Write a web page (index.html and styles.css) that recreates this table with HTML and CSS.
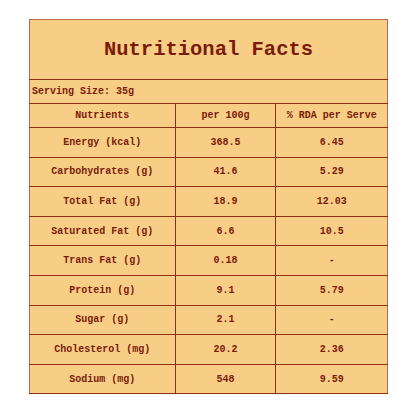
FILE: index.html
```html
<!DOCTYPE html>
<html lang="en">
<head>
    <meta charset="UTF-8">
    <meta name="viewport" content="width=device-width, initial-scale=1.0">
    <title>Nutritional Facts</title>
    <link rel="stylesheet" href="styles.css">
</head>
<body>
    <!-- Nutrition Table -->
    <table class="facts">
        <tr>
            <th class="facts-title" colspan="3">Nutritional Facts</th>
        </tr>
        <tr>
            <td class="serving" colspan="3">Serving Size: 35g</td>
        </tr>
        <tr class="head-row">
            <td class="col-name">Nutrients</td>
            <td class="col-value">per 100g</td>
            <td class="col-rda">% RDA per Serve</td>
        </tr>
        <tr><td>Energy (kcal)</td><td>368.5</td><td>6.45</td></tr>
        <tr><td>Carbohydrates (g)</td><td>41.6</td><td>5.29</td></tr>
        <tr><td>Total Fat (g)</td><td>18.9</td><td>12.03</td></tr>
        <tr><td>Saturated Fat (g)</td><td>6.6</td><td>10.5</td></tr>
        <tr><td>Trans Fat (g)</td><td>0.18</td><td>-</td></tr>
        <tr><td>Protein (g)</td><td>9.1</td><td>5.79</td></tr>
        <tr><td>Sugar (g)</td><td>2.1</td><td>-</td></tr>
        <tr><td>Cholesterol (mg)</td><td>20.2</td><td>2.36</td></tr>
        <tr><td>Sodium (mg)</td><td>548</td><td>9.59</td></tr>
    </table>
</body>
</html>
```

FILE: styles.css
```css
* {
    margin: 0;
    padding: 0;
    box-sizing: border-box;
}

body {
    background-color: #ffffff;
    font-family: "Liberation Mono", "Courier New", monospace;
    color: #7b1c0a;
    padding: 19px 0 0 29px;
}

.facts {
    width: 359px;
    border-collapse: collapse;
    background-color: #f8ce87;
    border: 1px solid #b5694e;
    font-weight: bold;
}

.facts td,
.facts th {
    border: 1px solid #8c2f14;
    font-size: 10px;
    text-align: center;
    height: 29.6px;
}

.facts-title {
    font-size: 20.5px !important;
    height: 60px !important;
    border-top-color: #b5694e !important;
    border-left-color: #b5694e !important;
    border-right-color: #b5694e !important;
}

.facts .serving {
    text-align: left;
    padding-left: 2px;
    height: 24px;
}

.head-row td {
    height: 24px;
}

.col-name {
    width: 146px;
}

.col-value {
    width: 101px;
}

.col-rda {
    width: 112px;
}

.facts tr td:first-child {
    border-left-color: #b5694e;
}

.facts tr td:last-child {
    border-right-color: #b5694e;
}
```
